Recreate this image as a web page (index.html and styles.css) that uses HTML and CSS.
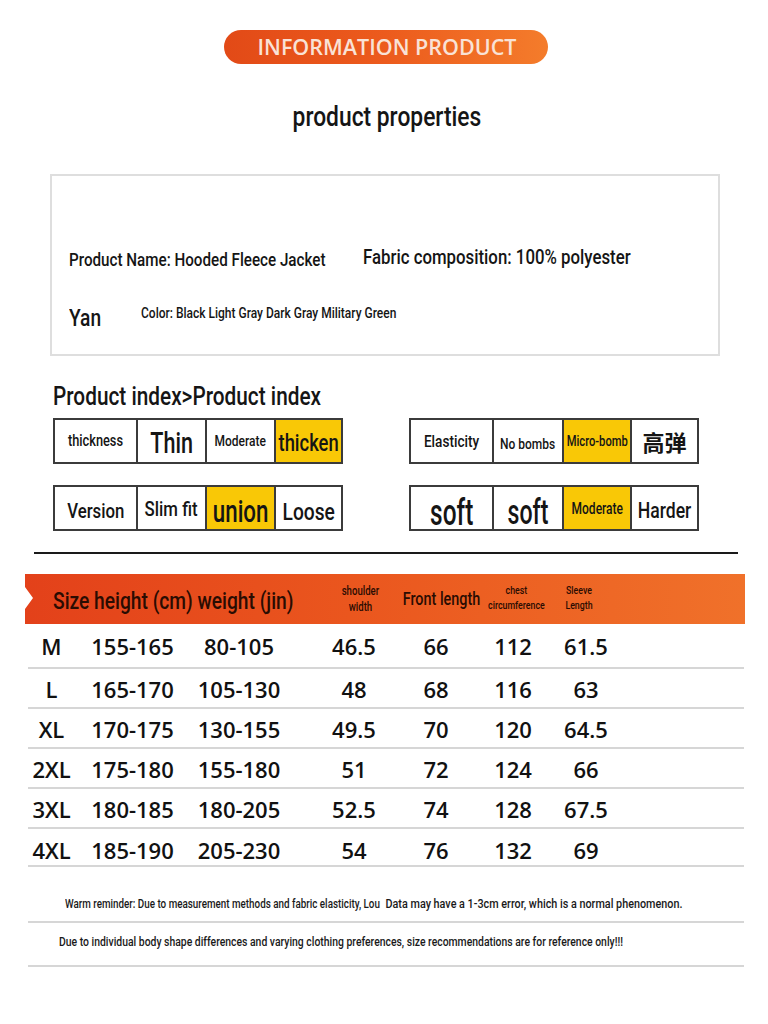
FILE: index.html
```html
<!DOCTYPE html>
<html lang="en">
<head>
<meta charset="utf-8">
<title>Information Product</title>
<link rel="stylesheet" href="styles.css">
</head>
<body>
<div class="page">
  <div class="pill">INFORMATION PRODUCT</div>
  <h1 class="title"><span class="cc">product properties</span></h1>

  <section class="props">
    <div class="props-row row-a">
      <span class="p-name"><span class="cn">Product Name: Hooded Fleece Jacket</span></span>
      <span class="p-fabric"><span class="cn">Fabric composition: 100% polyester</span></span>
    </div>
    <div class="props-row row-b">
      <span class="p-yan"><span class="cn">Yan</span></span>
      <span class="p-color"><span class="cn">Color: Black Light Gray Dark Gray Military Green</span></span>
    </div>
  </section>

  <h2 class="index-title"><span class="cn">Product index&gt;Product index</span></h2>

  <div class="index-grid">
    <div class="scale left">
      <div class="cell c1 f16"><span class="cc">thickness</span></div>
      <div class="cell c2 f30 dn2"><span class="cc xn">Thin</span></div>
      <div class="cell c3 f15"><span class="cc">Moderate</span></div>
      <div class="cell c4 f23 on dn2"><span class="cc">thicken</span></div>
    </div>
    <div class="scale right">
      <div class="cell c1 f17"><span class="cc">Elasticity</span></div>
      <div class="cell c2 f15 dn3"><span class="cc">No bombs</span></div>
      <div class="cell c3 f14 on"><span class="cc">Micro-bomb</span></div>
      <div class="cell c4 f22 cjk"><span>高弹</span></div>
    </div>
    <div class="scale left">
      <div class="cell c1 f21 dn3"><span class="cc">Version</span></div>
      <div class="cell c2 f21 dn1"><span class="cc">Slim fit</span></div>
      <div class="cell c3 f31 on dn4"><span class="cc xn">union</span></div>
      <div class="cell c4 f24 dn4"><span class="cc">Loose</span></div>
    </div>
    <div class="scale right">
      <div class="cell c1 f37 dn5"><span class="cc xxn">soft</span></div>
      <div class="cell c2 f35 dn5"><span class="cc xxn">soft</span></div>
      <div class="cell c3 f16 on dn1"><span class="cc n75">Moderate</span></div>
      <div class="cell c4 f22 dn3"><span class="cc">Harder</span></div>
    </div>
  </div>

  <hr class="divider">

  <div class="size-head">
    <span class="h-main"><span class="cn">Size height (cm) weight (jin)</span></span>
    <span class="h-sm h-shoulder"><span class="cc">shoulder<br>width</span></span>
    <span class="h-front"><span class="cc">Front length</span></span>
    <span class="h-xs h-chest"><span class="cc">chest<br>circumference</span></span>
    <span class="h-xs h-sleeve"><span class="cc">Sleeve<br>Length</span></span>
  </div>

  <div class="size-row first"><span>M</span><span>155-165</span><span>80-105</span><span class="c4">46.5</span><span>66</span><span>112</span><span>61.5</span></div>
  <div class="size-row"><span>L</span><span>165-170</span><span>105-130</span><span class="c4">48</span><span>68</span><span>116</span><span>63</span></div>
  <div class="size-row"><span>XL</span><span>170-175</span><span>130-155</span><span class="c4">49.5</span><span>70</span><span>120</span><span>64.5</span></div>
  <div class="size-row"><span>2XL</span><span>175-180</span><span>155-180</span><span class="c4">51</span><span>72</span><span>124</span><span>66</span></div>
  <div class="size-row"><span>3XL</span><span>180-185</span><span>180-205</span><span class="c4">52.5</span><span>74</span><span>128</span><span>67.5</span></div>
  <div class="size-row last"><span>4XL</span><span>185-190</span><span>205-230</span><span class="c4">54</span><span>76</span><span>132</span><span>69</span></div>

  <div class="note note-1"><span class="cn"><span class="small">Warm reminder: Due to measurement methods and fabric elasticity, Lou</span> <span class="big">Data may have a 1-3cm error, which is a normal phenomenon.</span></span></div>
  <div class="note note-2"><span class="cn">Due to individual body shape differences and varying clothing preferences, size recommendations are for reference only!!!</span></div>
</div>
</body>
</html>
```

FILE: styles.css
```css
* { box-sizing: border-box; }

body {
  margin: 0;
  background: #fff;
  color: #151515;
  font-family: Roboto, "Liberation Sans", sans-serif;
  font-weight: 500;
}

.page {
  width: 768px;
  height: 1024px;
  padding-top: 30px;
  overflow: hidden;
}

/* condensed look: the reference uses a narrow face */
.cn, .cc {
  --sx: 0.8;
  display: inline-block;
  white-space: nowrap;
  transform: scaleX(var(--sx));
}
.cn { transform-origin: left center; }
.cc { transform-origin: center center; }
.xn { --sx: 0.72; }
.xxn { --sx: 0.66; }
.n75 { --sx: 0.75; }

.pill {
  margin-left: 224px;
  width: 324px;
  height: 34px;
  border-radius: 17px;
  background: linear-gradient(90deg, #e24a17 0%, #ec5b1d 50%, #f47c2b 100%);
  color: #f9e2d6;
  font-family: "Open Sans", "Liberation Sans", sans-serif;
  font-weight: 600;
  font-size: 21.5px;
  line-height: 34px;
  text-align: center;
  padding-left: 2px;
}

.title {
  margin: 37px 0 0 0;
  height: 32px;
  font-size: 28.5px;
  font-weight: 500;
  line-height: 32px;
  text-align: center;
  padding-left: 6px;
  color: #151515;
}

.props {
  margin: 41px 0 0 50px;
  width: 670px;
  height: 182px;
  border: 2px solid #dedede;
  padding: 68px 0 0 17px;
}

.props-row { display: flex; align-items: center; }
.row-a { height: 26px; }
.row-b { height: 30px; margin-top: 30px; }

.p-name { width: 294px; font-size: 19px; padding-top: 4px; }
.p-fabric { font-size: 21px; }
.p-yan { width: 72px; font-size: 24px; padding-top: 5px; }
.p-color { font-size: 15px; padding-bottom: 4px; }

.index-title {
  margin: 25px 0 0 53px;
  height: 30px;
  font-size: 26px;
  font-weight: 500;
  line-height: 30px;
  color: #151515;
}

.index-grid {
  margin: 7px 0 0 53px;
  display: grid;
  grid-template-columns: 290px 290px;
  column-gap: 66px;
  row-gap: 21px;
}

.scale {
  display: flex;
  height: 46px;
  border: 2px solid #3b3b3b;
}

.cell {
  display: flex;
  align-items: center;
  justify-content: center;
  flex-shrink: 0;
  min-width: 0;
  border-left: 2px solid #3b3b3b;
  line-height: 1;
  white-space: nowrap;
  color: #151515;
}
.cell.c1 { border-left: 0; }
.left .c1 { width: 81px; }
.left .c2 { width: 69px; }
.left .c3 { width: 69px; }
.left .c4 { flex: 1 1 0; }
.right .c1 { width: 81px; }
.right .c2 { width: 70px; }
.right .c3 { width: 68px; }
.right .c4 { flex: 1 1 0; }

.cell.on { background: #f9c806; }
.cell.cjk { font-family: "Noto Sans CJK SC", sans-serif; font-weight: 700; }

.dn1 { padding-top: 2px; }
.dn2 { padding-top: 4px; }
.dn3 { padding-top: 6px; }
.dn4 { padding-top: 7px; }
.dn5 { padding-top: 8px; }

.f14 { font-size: 14px; }
.f15 { font-size: 15px; }
.f16 { font-size: 16px; }
.f17 { font-size: 17px; }
.f21 { font-size: 21px; }
.f22 { font-size: 22px; }
.f23 { font-size: 23px; }
.f24 { font-size: 24px; }
.f30 { font-size: 30px; }
.f31 { font-size: 31px; }
.f35 { font-size: 35px; }
.f37 { font-size: 37px; }

.divider {
  margin: 21px 0 0 34px;
  width: 704px;
  height: 2px;
  border: 0;
  background: #1a1a1a;
}

.size-head {
  margin: 20px 0 0 25px;
  width: 720px;
  height: 50px;
  background: linear-gradient(90deg, #e3411a 0%, #ea561e 45%, #f0712a 100%);
  clip-path: polygon(0 0, 100% 0, 100% 100%, 0 100%, 0 70%, 8px 48%, 0 26%);
  display: flex;
  align-items: center;
  color: #2a0c02;
}

.h-main { margin-left: 28px; font-size: 24px; padding-top: 3px; width: 265px; }
.h-sm, .h-xs, .h-front {
  display: flex;
  justify-content: center;
  text-align: center;
  line-height: 1.35;
}
.h-sm { font-size: 12px; width: 50px; margin-left: 17px; }
.h-front { font-size: 18px; width: 80px; margin-left: 16px; }
.h-xs { font-size: 11px; }
.h-chest { width: 70px; }
.h-sleeve { width: 40px; margin-left: 8px; }

.size-row {
  margin-left: 28px;
  width: 716px;
  height: 40px;
  border-bottom: 2px solid #d6d6d6;
  display: grid;
  grid-template-columns: 47px 115px 98px 22px 88px 76px 78px 68px;
  align-items: center;
  justify-items: center;
  font-family: "Open Sans", "Liberation Sans", sans-serif;
  font-weight: 600;
  font-size: 22px;
  color: #111;
  padding-top: 2px;
  white-space: nowrap;
}
.size-row.first { height: 45px; padding-top: 1px; }
.size-row.last { height: 38px; padding-top: 6px; }
.size-row .c4 { grid-column: 5; }

.note {
  margin: 0 0 0 28px;
  width: 716px;
  border-bottom: 2px solid #d6d6d6;
  color: #1a1a1a;
  white-space: nowrap;
  line-height: 16px;
}
.note-1 {
  height: 56px;
  padding: 28px 0 0 37px;
}
.note-1 .small { font-size: 12.3px; }
.note-1 .big { font-size: 13.5px; margin-left: 3px; }
.note-2 {
  height: 44px;
  padding: 11px 0 0 31px;
  font-size: 13px;
}
```
